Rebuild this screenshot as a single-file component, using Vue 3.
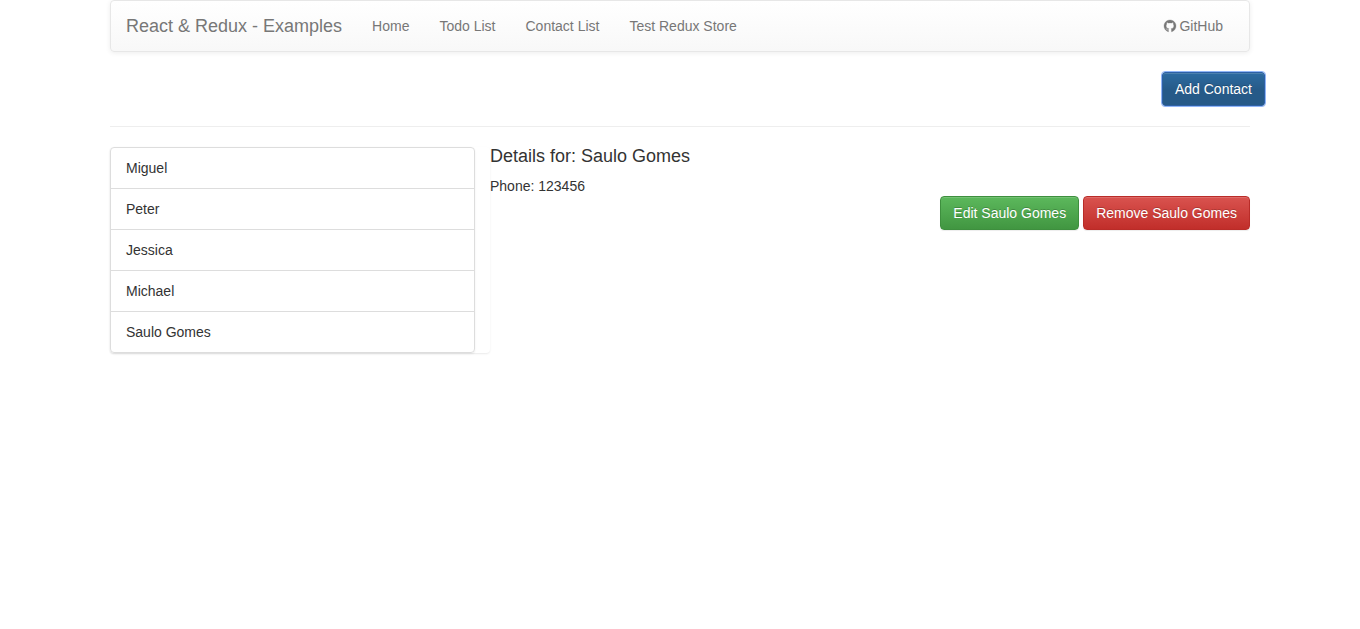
<script setup>
const links = ['Home', 'Todo List', 'Contact List', 'Test Redux Store']
const contacts = ['Miguel', 'Peter', 'Jessica', 'Michael', 'Saulo Gomes']
</script>

<template>
  <div class="container">
    <nav class="navbar">
      <a class="brand">React &amp; Redux - Examples</a>
      <a v-for="link in links" :key="link" class="nav-link">{{ link }}</a>
      <a class="nav-link github">
        <svg class="icon" viewBox="0 0 1536 1536" aria-hidden="true">
          <path d="M768 0q209 0 385.500 103t279.500 279.500 103 385.500q0 251-146.500 451.500t-378.500 277.500q-27 5-40-7t-13-30q0-3 .5-76.500t.5-134.500q0-97-52-142 57-6 102.500-18t94-39 81-66.500 53-105 20.500-150.500q0-119-79-206 37-91-8-204-28-9-81 11t-92 44l-38 24q-93-26-192-26t-192 26q-16-11-42.500-27t-83.500-38.500-85-13.500q-45 113-8 204-79 87-79 206 0 85 20.500 150t52.500 105 80.500 67 94 39 102.500 18q-39 36-49 103-21 10-45 15t-57 5-65.500-21.500-55.500-62.500q-19-32-48.500-52t-49.500-24l-20-3q-21 0-29 4.500t-5 11.500 9 14 13 12l7 5q22 10 43.500 38t31.500 51l10 23q13 38 44 61.500t67 30 69.500 7 55.500-3.500l23-4q0 38 .5 88.500t.5 54.500q0 18-13 30t-40 7q-232-77-378.500-277.500t-146.500-451.500q0-209 103-385.500t279.500-279.500 385.500-103z" />
        </svg>
        GitHub
      </a>
    </nav>
    <div class="toolbar">
      <button class="btn primary">Add Contact</button>
    </div>
    <hr class="rule">
    <div class="content">
      <div class="contacts">
        <ul class="list">
          <li v-for="name in contacts" :key="name">{{ name }}</li>
        </ul>
      </div>
      <section class="details">
        <h4>Details for: Saulo Gomes</h4>
        <div>Phone: 123456</div>
        <div class="actions">
          <button class="btn success">Edit Saulo Gomes</button>
          <button class="btn danger">Remove Saulo Gomes</button>
        </div>
      </section>
    </div>
  </div>
</template>

<style>
body {
  margin: 0;
  background: #fff;
}
</style>

<style scoped>
* {
  box-sizing: border-box;
}
.container {
  width: 1140px;
  min-height: 100vh;
  margin: 0 auto;
  font: 14px/20px "Liberation Sans", Arial, sans-serif;
  color: #333;
}
.navbar {
  display: flex;
  align-items: center;
  height: 52px;
  margin-bottom: 20px;
  border: 1px solid #e7e7e7;
  border-radius: 4px;
  background: linear-gradient(to bottom, #fff 0, #f8f8f8 100%);
  box-shadow: inset 0 1px 0 rgba(255, 255, 255, .15), 0 1px 5px rgba(0, 0, 0, .075);
  color: #777;
  text-shadow: 0 1px 0 rgba(255, 255, 255, .25);
}
.brand {
  padding: 0 15px;
  font-size: 18px;
}
.nav-link {
  padding: 0 15px;
}
.github {
  margin-left: auto;
  padding-right: 26px;
}
.icon {
  display: inline-block;
  width: 12px;
  height: 12px;
  vertical-align: -1px;
  overflow: visible;
  fill: currentColor;
  stroke: currentColor;
  stroke-width: 40;
}
.toolbar {
  display: flex;
  justify-content: flex-end;
  margin-right: -15px;
}
.btn {
  height: 34px;
  padding: 6px 12px;
  border: 1px solid;
  border-radius: 4px;
  font: inherit;
  color: #fff;
  white-space: nowrap;
  text-shadow: 0 -1px 0 rgba(0, 0, 0, .2);
  box-shadow: inset 0 1px 0 rgba(255, 255, 255, .15), 0 1px 1px rgba(0, 0, 0, .075);
}
.primary {
  border-color: #2e61a5;
  border-radius: 3px;
  background: #265a88 linear-gradient(to bottom, #337ab7 0, #265a88 100%) repeat-x 0 -15px;
  outline: 1px solid #8fb5f7;
}
.success {
  border-color: #3e8f3e;
  background: linear-gradient(to bottom, #5cb85c 0, #419641 100%);
}
.danger {
  border-color: #b92c28;
  background: linear-gradient(to bottom, #d9534f 0, #c12e2a 100%);
}
.rule {
  height: 1px;
  margin: 20px 0;
  border: 0;
  background: #eee;
}
.content {
  display: flex;
  align-items: flex-start;
}
.contacts {
  width: 380px;
  padding-right: 15px;
  border-radius: 4px;
  box-shadow: 0 1px 2px rgba(0, 0, 0, .085);
}
.list {
  margin: 0;
  padding: 0;
  list-style: none;
  border: 1px solid #ddd;
  border-radius: 4px;
  box-shadow: 0 1px 2px rgba(0, 0, 0, .075);
}
.list li {
  height: 41px;
  padding: 10px 15px;
}
.list li:first-child {
  height: 40px;
}
.list li + li {
  border-top: 1px solid #ddd;
}
.details {
  flex: 1;
  margin-top: -1px;
}
h4 {
  margin: 0 0 10px;
  font-size: 18px;
  font-weight: 500;
  line-height: 20px;
}
.actions {
  display: flex;
  justify-content: flex-end;
  gap: 4px;
}
</style>
